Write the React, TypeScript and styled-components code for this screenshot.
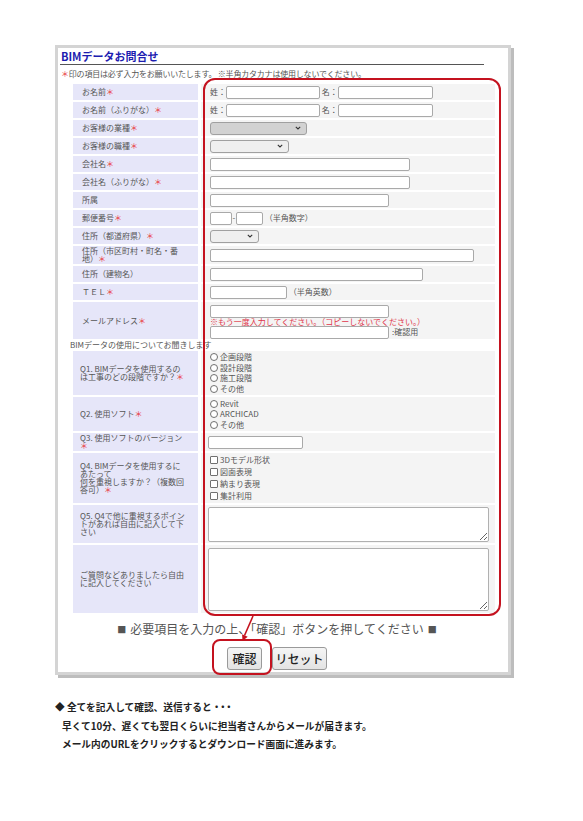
import React from "react";
import styled, { createGlobalStyle } from "styled-components";

const GlobalStyle = createGlobalStyle`
  html, body { margin: 0; padding: 0; background: #fff; }
  body { font-family: "Noto Sans CJK JP", "Noto Sans", sans-serif; color: #555; }
  * { box-sizing: border-box; }
`;

const Page = styled.div`
  width: 583px;
  min-height: 821px;
  padding: 45px 0 0 52px;
`;

const Frame = styled.div`
  position: relative;
  margin-left: 3px;
  width: 456px;
  border: 3px solid #d4d4d4;
  box-shadow: 3px 3px 0 #bdbdbd;
  background: #fff;
  padding-bottom: 2px;
`;

const Title = styled.h1`
  margin: 0;
  padding: 1px 0 0 3px;
  font-size: 11px;
  line-height: 14px;
  font-weight: 700;
  color: #1d1db0;
`;

const Rule = styled.div`
  margin: 1px 0 0 2px;
  width: 424px;
  height: 1px;
  background: #555;
`;

const Note = styled.p`
  margin: 3px 0 0;
  padding-left: 3px;
  font-size: 8px;
  line-height: 12px;
  color: #555;
  white-space: nowrap;
  letter-spacing: -0.2px;
`;

const Req = styled.span`
  color: #e8383d;
`;

const FormTable = styled.table`
  margin: 2px 0 0 12px;
  border-collapse: separate;
  border-spacing: 3px 2px;
  width: 428px;
  table-layout: fixed;
`;

const Label = styled.td<{ $h: number; $pl?: number }>`
  width: 125px;
  height: ${(p) => p.$h}px;
  padding: 0 2px 0 ${(p) => p.$pl ?? 9}px;
  background: #e6e6f9;
  font-size: 8px;
  line-height: 8px;
  color: #555;
  vertical-align: middle;
  white-space: nowrap;
`;

const Value = styled.td<{ $pl?: number }>`
  padding: 0 0 0 ${(p) => p.$pl ?? 9}px;
  background: #f4f4f4;
  vertical-align: middle;
  font-size: 8px;
  color: #555;
`;

const SectionCell = styled.td`
  height: 8px;
  padding: 0;
  font-size: 8px;
  line-height: 8px;
  color: #555;
  white-space: nowrap;
`;

const SectionText = styled.span`
  display: block;
  margin-left: -3px;
`;

const Line = styled.div<{ $gap?: number }>`
  display: flex;
  align-items: center;
  gap: ${(p) => p.$gap ?? 0}px;
  white-space: nowrap;
  font-size: 8px;
  line-height: 8px;
`;

const Stack = styled.div`
  display: flex;
  flex-direction: column;
  padding-top: 2px;
`;

const TextBox = styled.input<{ $w: number; $ml?: number }>`
  width: ${(p) => p.$w}px;
  height: 13px;
  margin: 0 0 0 ${(p) => p.$ml ?? 0}px;
  padding: 0 2px;
  border: 1px solid #a9a9a9;
  border-radius: 2px;
  background: #fff;
  font-size: 8px;
  outline: none;
`;

const Caption = styled.span<{ $w?: number }>`
  display: inline-block;
  ${(p) => (p.$w ? `width: ${p.$w}px; text-align: center;` : "")}
`;

const Warn = styled.span`
  color: #e0354a;
  font-size: 8px;
  line-height: 8px;
  white-space: nowrap;
`;

const SelectBox = styled.div<{ $w: number; $dark?: boolean }>`
  width: ${(p) => p.$w}px;
  height: 13px;
  border: 1px solid #a0a0a0;
  border-radius: 3px;
  background: ${(p) => (p.$dark ? "#d2d2d2" : "#efefef")};
  display: flex;
  align-items: center;
  justify-content: flex-end;
  padding-right: 5px;
`;

const ChoiceList = styled.div<{ $lh: number }>`
  display: flex;
  flex-direction: column;
  & > * {
    height: ${(p) => p.$lh}px;
  }
`;

const Choice = styled.label`
  display: flex;
  align-items: center;
  gap: 2px;
  font-size: 8px;
  line-height: 8px;
  color: #555;
  white-space: nowrap;
`;

const RadioDot = styled.span`
  width: 8px;
  height: 8px;
  border: 1px solid #707070;
  border-radius: 50%;
  background: #fff;
  flex: none;
`;

const CheckSq = styled.span`
  width: 8px;
  height: 8px;
  border: 1px solid #707070;
  border-radius: 1px;
  background: #fff;
  flex: none;
`;

const TextArea = styled.textarea<{ $h: number }>`
  display: block;
  width: 281px;
  height: ${(p) => p.$h}px;
  margin: 0 0 0 -2px;
  border: 1px solid #b0b0b0;
  border-radius: 2px;
  background: #fff;
  resize: both;
  outline: none;
`;

const Footer = styled.div`
  width: 438px;
  text-align: center;
`;

const Instruction = styled.p`
  margin: 6px 0 0;
  font-size: 12px;
  line-height: 16px;
  color: #555;
  white-space: nowrap;
`;

const Mark = styled.span`
  display: inline-block;
  width: 12px;
  font-size: 9px;
  text-align: center;
  vertical-align: 1px;
`;

const Buttons = styled.div`
  display: flex;
  justify-content: center;
  gap: 10px;
  margin-top: 9px;
`;

const Btn = styled.button<{ $w: number }>`
  width: ${(p) => p.$w}px;
  height: 23px;
  padding: 0;
  font-family: inherit;
  font-size: 12px;
  line-height: 12px;
  font-weight: 500;
  color: #222;
  border: 1px solid #9a9a9a;
  border-radius: 3px;
  background: linear-gradient(#f5f5f5, #e3e3e3);
`;

const Highlight = styled.div<{ $l: number; $t: number; $w: number; $h: number; $r: number }>`
  position: absolute;
  left: ${(p) => p.$l}px;
  top: ${(p) => p.$t}px;
  width: ${(p) => p.$w}px;
  height: ${(p) => p.$h}px;
  border: 2px solid #c4121f;
  border-radius: ${(p) => p.$r}px;
  pointer-events: none;
`;

const ArrowSvg = styled.svg`
  position: absolute;
  left: 180px;
  top: 566px;
  overflow: visible;
`;

const Info = styled.div`
  margin: 23px 0 0 3px;
  font-size: 9.7px;
  font-weight: 700;
  line-height: 18.5px;
  color: #222;
`;

const InfoLine = styled.p<{ $indent?: number }>`
  margin: 0;
  padding-left: ${(p) => p.$indent ?? 0}px;
  white-space: nowrap;
`;

const Tight = styled.span`
  letter-spacing: -3.5px;
`;

const Chevron = () => (
  <svg width="6" height="4" viewBox="0 0 6 4">
    <polyline points="0.8,0.8 3,3 5.2,0.8" fill="none" stroke="#333" strokeWidth="1.1" />
  </svg>
);

const Star = () => <Req>＊</Req>;

export default function App() {
  return (
    <>
      <GlobalStyle />
      <Page>
        <Frame>
          <Title>BIMデータお問合せ</Title>
          <Rule />
          <Note>
            <Req>＊</Req>印の項目は必ず入力をお願いいたします。 ※半角カタカナは使用しないでください。
          </Note>
          <FormTable>
            <tbody>
              <tr>
                <Label $h={16}>お名前<Star /></Label>
                <Value>
                  <Line>
                    <Caption>姓：</Caption>
                    <TextBox $w={94} />
                    <Caption>&nbsp;</Caption>
                    <Caption>名：</Caption>
                    <TextBox $w={95} />
                  </Line>
                </Value>
              </tr>
              <tr>
                <Label $h={16}>お名前（ふりがな）<Star /></Label>
                <Value>
                  <Line>
                    <Caption>姓：</Caption>
                    <TextBox $w={94} />
                    <Caption>&nbsp;</Caption>
                    <Caption>名：</Caption>
                    <TextBox $w={95} />
                  </Line>
                </Value>
              </tr>
              <tr>
                <Label $h={16}>お客様の業種<Star /></Label>
                <Value>
                  <SelectBox $w={97} $dark>
                    <Chevron />
                  </SelectBox>
                </Value>
              </tr>
              <tr>
                <Label $h={16}>お客様の職種<Star /></Label>
                <Value>
                  <SelectBox $w={79}>
                    <Chevron />
                  </SelectBox>
                </Value>
              </tr>
              <tr>
                <Label $h={16}>会社名<Star /></Label>
                <Value>
                  <TextBox $w={200} />
                </Value>
              </tr>
              <tr>
                <Label $h={16}>会社名（ふりがな）<Star /></Label>
                <Value>
                  <TextBox $w={200} />
                </Value>
              </tr>
              <tr>
                <Label $h={16}>所属</Label>
                <Value>
                  <TextBox $w={179} />
                </Value>
              </tr>
              <tr>
                <Label $h={16}>郵便番号<Star /></Label>
                <Value>
                  <Line>
                    <TextBox $w={22} />
                    <Caption $w={4}>-</Caption>
                    <TextBox $w={27} />
                    <Caption>&nbsp;（半角数字）</Caption>
                  </Line>
                </Value>
              </tr>
              <tr>
                <Label $h={16}>住所（都道府県）<Star /></Label>
                <Value>
                  <SelectBox $w={49}>
                    <Chevron />
                  </SelectBox>
                </Value>
              </tr>
              <tr>
                <Label $h={18}>
                  住所（市区町村・町名・番
                  <br />
                  地）<Star />
                </Label>
                <Value>
                  <TextBox $w={264} />
                </Value>
              </tr>
              <tr>
                <Label $h={16}>住所（建物名）</Label>
                <Value>
                  <TextBox $w={213} />
                </Value>
              </tr>
              <tr>
                <Label $h={16}>ＴＥＬ<Star /></Label>
                <Value>
                  <Line>
                    <TextBox $w={77} />
                    <Caption>&nbsp;（半角英数）</Caption>
                  </Line>
                </Value>
              </tr>
              <tr>
                <Label $h={37}>メールアドレス<Star /></Label>
                <Value>
                  <Stack>
                    <TextBox $w={179} />
                    <Warn>※もう一度入力してください。（コピーしないでください。）</Warn>
                    <Line $gap={3}>
                      <TextBox $w={179} />
                      <Caption>:確認用</Caption>
                    </Line>
                  </Stack>
                </Value>
              </tr>
              <tr>
                <SectionCell colSpan={2}>
                  <SectionText>BIMデータの使用についてお聞きします</SectionText>
                </SectionCell>
              </tr>
              <tr>
                <Label $h={44} $pl={7}>
                  Q1. BIMデータを使用するの
                  <br />
                  は工事のどの段階ですか？<Star />
                </Label>
                <Value>
                  <ChoiceList $lh={10.5}>
                    {["企画段階", "設計段階", "施工段階", "その他"].map((t) => (
                      <Choice key={t}>
                        <RadioDot />
                        {t}
                      </Choice>
                    ))}
                  </ChoiceList>
                </Value>
              </tr>
              <tr>
                <Label $h={34} $pl={7}>
                  Q2. 使用ソフト<Star />
                </Label>
                <Value>
                  <ChoiceList $lh={10.5}>
                    {["Revit", "ARCHICAD", "その他"].map((t) => (
                      <Choice key={t}>
                        <RadioDot />
                        {t}
                      </Choice>
                    ))}
                  </ChoiceList>
                </Value>
              </tr>
              <tr>
                <Label $h={18} $pl={7}>
                  Q3. 使用ソフトのバージョン
                  <br />
                  <Star />
                </Label>
                <Value>
                  <TextBox $w={95} $ml={-2} />
                </Value>
              </tr>
              <tr>
                <Label $h={50} $pl={7}>
                  Q4. BIMデータを使用するに
                  <br />
                  あたって
                  <br />
                  何を重視しますか？（複数回
                  <br />
                  答可）<Star />
                </Label>
                <Value>
                  <ChoiceList $lh={12}>
                    {["3Dモデル形状", "図面表現", "納まり表現", "集計利用"].map((t) => (
                      <Choice key={t}>
                        <CheckSq />
                        {t}
                      </Choice>
                    ))}
                  </ChoiceList>
                </Value>
              </tr>
              <tr>
                <Label $h={38} $pl={7}>
                  Q5. Q4で他に重視するポイン
                  <br />
                  トがあれば自由に記入して下
                  <br />
                  さい
                </Label>
                <Value>
                  <TextArea $h={35} />
                </Value>
              </tr>
              <tr>
                <Label $h={68} $pl={7}>
                  ご質問などありましたら自由
                  <br />
                  に記入してください
                </Label>
                <Value>
                  <TextArea $h={63} />
                </Value>
              </tr>
            </tbody>
          </FormTable>
          <Footer>
            <Instruction>
              <Mark>■</Mark> 必要項目を入力の上、「確認」ボタンを押してください <Mark>■</Mark>
            </Instruction>
            <Buttons>
              <Btn $w={35}>確認</Btn>
              <Btn $w={55}>リセット</Btn>
            </Buttons>
          </Footer>
          <Highlight $l={145} $t={30} $w={298} $h={538} $r={12} />
          <Highlight $l={154} $t={591} $w={60} $h={36} $r={8} />
          <ArrowSvg width="22" height="30" viewBox="0 0 22 30">
            <line x1="15" y1="2" x2="6.5" y2="21.5" stroke="#c4121f" strokeWidth="1.6" />
            <polygon points="4.5,27 9.7,22.7 4.1,20.3" fill="#c4121f" />
          </ArrowSvg>
        </Frame>
        <Info>
          <InfoLine>
            ◆ 全てを記入して確認、送信すると<Tight>・・・</Tight>
          </InfoLine>
          <InfoLine $indent={7}>早くて10分、遅くても翌日くらいに担当者さんからメールが届きます。</InfoLine>
          <InfoLine $indent={7}>メール内のURLをクリックするとダウンロード画面に進みます。</InfoLine>
        </Info>
      </Page>
    </>
  );
}
